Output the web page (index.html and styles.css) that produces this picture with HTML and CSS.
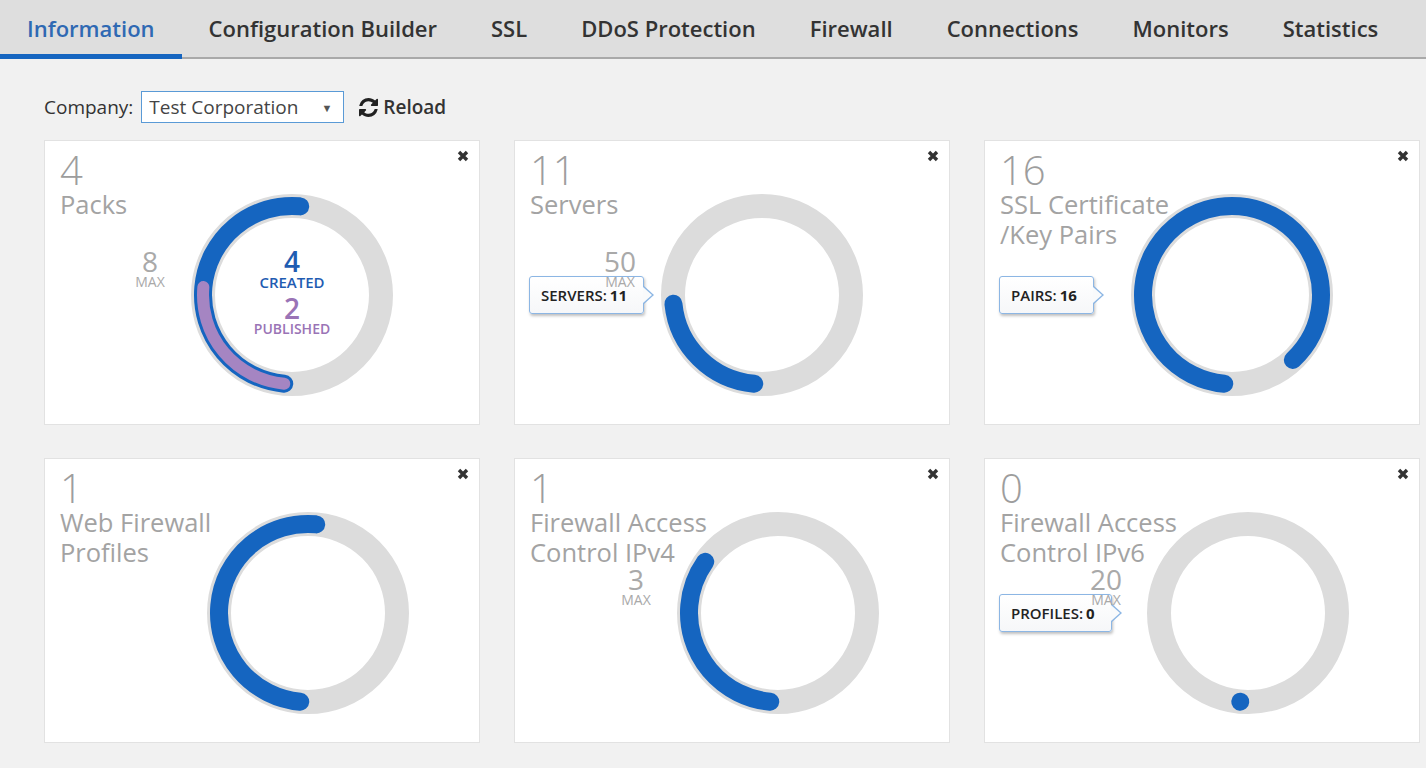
FILE: index.html
```html
<!DOCTYPE html>
<html lang="en">
<head>
  <meta charset="UTF-8">
  <title>Information</title>
  <link rel="stylesheet" href="styles.css">
</head>
<body>
  <!-- Top tabs -->
  <nav class="tabs">
    <a class="tab active">Information</a>
    <a class="tab">Configuration Builder</a>
    <a class="tab">SSL</a>
    <a class="tab">DDoS Protection</a>
    <a class="tab">Firewall</a>
    <a class="tab">Connections</a>
    <a class="tab">Monitors</a>
    <a class="tab">Statistics</a>
  </nav>

  <main class="page">
    <div class="toolbar">
      <label class="toolbar-label">Company:</label>
      <div class="select">Test Corporation <span class="caret">&#9660;</span></div>
      <button class="reload">
        <svg class="reload-icon" viewBox="0 0 1536 1536"><path d="M1511 928q0 5-1 7-64 268-268 434.5T764 1536q-146 0-282.5-55T238 1324l-129 129q-19 19-45 19t-45-19-19-45V960q0-26 19-45t45-19h448q26 0 45 19t19 45-19 45l-137 137q71 66 161 102t187 36q134 0 250-65t186-179q11-17 53-117 8-23 30-23h192q13 0 22.5 9.5t9.5 22.5zm25-800v448q0 26-19 45t-45 19h-448q-26 0-45-19t-19-45 19-45l138-138Q969 256 768 256q-134 0-250 65T332 500q-11 17-53 117-8 23-30 23H50q-13 0-22.5-9.5T18 608v-7q65-268 270-434.5T768 0q146 0 284 55.5T1297 212l130-129q19-19 45-19t45 19 19 45z"/></svg>
        Reload
      </button>
    </div>

    <div class="cards">
      <!-- Packs -->
      <div class="card">
        <div class="chart">
          <svg viewBox="0 0 206 206">
            <circle class="track" cx="103" cy="103" r="89"/>
            <circle class="arc" cx="103" cy="103" r="89" stroke-dasharray="279.6 600" transform="rotate(95 103 103)"/>
            <circle class="arc-sub" cx="103" cy="103" r="89" stroke-dasharray="139.8 600" transform="rotate(95 103 103)"/>
          </svg>
          <div class="max"><b>8</b><span>MAX</span></div>
          <div class="center">
            <b class="created">4</b><span class="created">CREATED</span>
            <b class="published">2</b><span class="published">PUBLISHED</span>
          </div>
        </div>
        <div class="info"><div class="count">4</div><div class="title">Packs</div></div>
        <span class="close"><svg viewBox="0 0 12 12"><path d="M2 2L10 10M10 2L2 10"/></svg></span>
      </div>

      <!-- Servers -->
      <div class="card">
        <div class="chart">
          <svg viewBox="0 0 206 206">
            <circle class="track" cx="103" cy="103" r="89"/>
            <circle class="arc" cx="103" cy="103" r="89" stroke-dasharray="123 600" transform="rotate(95 103 103)"/>
          </svg>
          <div class="max"><b>50</b><span>MAX</span></div>
        </div>
        <div class="info"><div class="count">11</div><div class="title">Servers</div></div>
        <span class="close"><svg viewBox="0 0 12 12"><path d="M2 2L10 10M10 2L2 10"/></svg></span>
        <div class="tip">SERVERS:<b>11</b></div>
      </div>

      <!-- SSL pairs -->
      <div class="card">
        <div class="chart">
          <svg viewBox="0 0 206 206">
            <circle class="track" cx="103" cy="103" r="89"/>
            <circle class="arc" cx="103" cy="103" r="89" stroke-dasharray="483.7 600" transform="rotate(95 103 103)"/>
          </svg>
        </div>
        <div class="info"><div class="count">16</div><div class="title">SSL Certificate<br>/Key Pairs</div></div>
        <span class="close"><svg viewBox="0 0 12 12"><path d="M2 2L10 10M10 2L2 10"/></svg></span>
        <div class="tip">PAIRS:<b>16</b></div>
      </div>

      <!-- Web firewall -->
      <div class="card low">
        <div class="chart">
          <svg viewBox="0 0 206 206">
            <circle class="track" cx="103" cy="103" r="89"/>
            <circle class="arc" cx="103" cy="103" r="89" stroke-dasharray="279.6 600" transform="rotate(95 103 103)"/>
          </svg>
        </div>
        <div class="info"><div class="count">1</div><div class="title">Web Firewall<br>Profiles</div></div>
        <span class="close"><svg viewBox="0 0 12 12"><path d="M2 2L10 10M10 2L2 10"/></svg></span>
      </div>

      <!-- ACL v4 -->
      <div class="card low">
        <div class="chart">
          <svg viewBox="0 0 206 206">
            <circle class="track" cx="103" cy="103" r="89"/>
            <circle class="arc" cx="103" cy="103" r="89" stroke-dasharray="186.4 600" transform="rotate(95 103 103)"/>
          </svg>
          <div class="max"><b>3</b><span>MAX</span></div>
        </div>
        <div class="info"><div class="count">1</div><div class="title">Firewall Access<br>Control IPv4</div></div>
        <span class="close"><svg viewBox="0 0 12 12"><path d="M2 2L10 10M10 2L2 10"/></svg></span>
      </div>

      <!-- ACL v6 -->
      <div class="card low">
        <div class="chart">
          <svg viewBox="0 0 206 206">
            <circle class="track" cx="103" cy="103" r="89"/>
            <circle class="arc" cx="103" cy="103" r="89" stroke-dasharray="0.01 600" transform="rotate(95 103 103)"/>
          </svg>
          <div class="max"><b>20</b><span>MAX</span></div>
        </div>
        <div class="info"><div class="count">0</div><div class="title">Firewall Access<br>Control IPv6</div></div>
        <span class="close"><svg viewBox="0 0 12 12"><path d="M2 2L10 10M10 2L2 10"/></svg></span>
        <div class="tip">PROFILES:<b>0</b></div>
      </div>
    </div>
  </main>
</body>
</html>
```

FILE: styles.css
```css
/* Base */
body {
  margin: 0;
  font-family: 'Open Sans', 'Liberation Sans', sans-serif;
  background: #f1f1f1;
  color: #333;
}

/* Tabs */
.tabs {
  display: flex;
  background: #dedede;
  border-bottom: 2px solid #a9a9a9;
}

.tab {
  height: 57px;
  line-height: 57px;
  padding: 0 27px;
  font-size: 22px;
  font-weight: 600;
  color: #333;
  box-sizing: border-box;
}

.tab.active {
  color: #2f69b3;
  height: 59px;
  margin-bottom: -2px;
  border-bottom: 5px solid #1565c0;
}

/* Toolbar */
.page {
  padding: 32px 6px 0 44px;
}

.toolbar {
  display: flex;
  align-items: center;
  height: 32px;
  font-size: 19px;
}

.toolbar-label {
  margin-right: 8px;
}

.select {
  display: flex;
  align-items: center;
  justify-content: space-between;
  box-sizing: border-box;
  width: 203px;
  height: 32px;
  padding: 0 11px 0 7px;
  background: #fff;
  border: 1px solid #5a9ad6;
  color: #444;
}

.caret {
  font-size: 11px;
  color: #555;
}

.reload {
  display: flex;
  align-items: center;
  gap: 5px;
  margin-left: 15px;
  padding: 0;
  border: none;
  background: none;
  font-family: inherit;
  font-size: 19px;
  font-weight: 600;
  color: #333;
}

.reload-icon {
  width: 19px;
  height: 19px;
  fill: #222;
}

/* Cards */
.cards {
  display: grid;
  grid-template-columns: repeat(3, 436px);
  column-gap: 34px;
  row-gap: 33px;
  margin-top: 17px;
}

.card {
  position: relative;
  display: grid;
  height: 285px;
  box-sizing: border-box;
  background: #fff;
  border: 1px solid #e2e2e2;
}

.card > .chart,
.card > .info,
.card > .close {
  grid-area: 1 / 1;
}

.info {
  position: relative;
  z-index: 1;
  padding: 10px 0 0 15px;
  color: #a3a3a3;
  pointer-events: none;
}

.count {
  font-size: 40px;
  font-weight: 300;
  line-height: 38px;
  color: #9d9d9d;
}

.title {
  font-size: 25.5px;
  line-height: 30px;
}

.close {
  justify-self: end;
  align-self: start;
  width: 12px;
  height: 12px;
  margin: 9px 10px 0 0;
}

.close svg {
  display: block;
  width: 12px;
  height: 12px;
  stroke: #333;
  stroke-width: 3.4;
}

/* Donut */
.chart {
  position: relative;
  align-self: start;
  justify-self: start;
  width: 206px;
  height: 206px;
  margin: 51px 0 0 144px;
}

.card.low .chart {
  margin-left: 160px;
}

.chart svg {
  display: block;
  width: 206px;
  height: 206px;
}

.track {
  fill: none;
  stroke: #dcdcdc;
  stroke-width: 24;
}

.arc {
  fill: none;
  stroke: #1565c0;
  stroke-width: 18;
  stroke-linecap: round;
}

.arc-sub {
  fill: none;
  stroke: #a585c2;
  stroke-width: 12;
  stroke-linecap: round;
}

.max,
.center {
  position: absolute;
  top: 55px;
  display: flex;
  flex-direction: column;
  align-items: center;
  text-align: center;
}

.max {
  z-index: 3;
  left: -69px;
  width: 60px;
  color: #a9a9a9;
}

.center {
  left: 0;
  right: 0;
}

.max b,
.center b {
  font-size: 28px;
  line-height: 28px;
  font-weight: 600;
}

.max b {
  font-weight: 400;
}

.max span,
.center span {
  font-size: 14px;
  line-height: 14px;
}

.center span {
  font-weight: 600;
}

.center span.created {
  margin-bottom: 5px;
  font-size: 15px;
}

.created {
  color: #1f5cb2;
}

.published {
  color: #9a74b6;
}

/* Tooltip */
.tip {
  position: absolute;
  z-index: 2;
  left: 14px;
  top: 135px;
  height: 38px;
  box-sizing: border-box;
  padding: 0 16px 0 11px;
  line-height: 36px;
  font-size: 15px;
  font-weight: 600;
  color: #222;
  background: linear-gradient(#fff, #f6f7f9);
  border: 1px solid #8cb6e4;
  border-radius: 3px;
  box-shadow: 1px 2px 3px rgba(0, 0, 0, 0.25);
}

.tip b {
  margin-left: 3px;
  font-weight: 700;
}

.tip::before,
.tip::after {
  content: '';
  position: absolute;
  top: 50%;
  border-style: solid;
  border-color: transparent;
}

.tip::before {
  right: -11px;
  margin-top: -9px;
  border-width: 9px 0 9px 10px;
  border-left-color: #8cb6e4;
}

.tip::after {
  right: -9px;
  margin-top: -8px;
  border-width: 8px 0 8px 9px;
  border-left-color: #f9fafb;
}
```
